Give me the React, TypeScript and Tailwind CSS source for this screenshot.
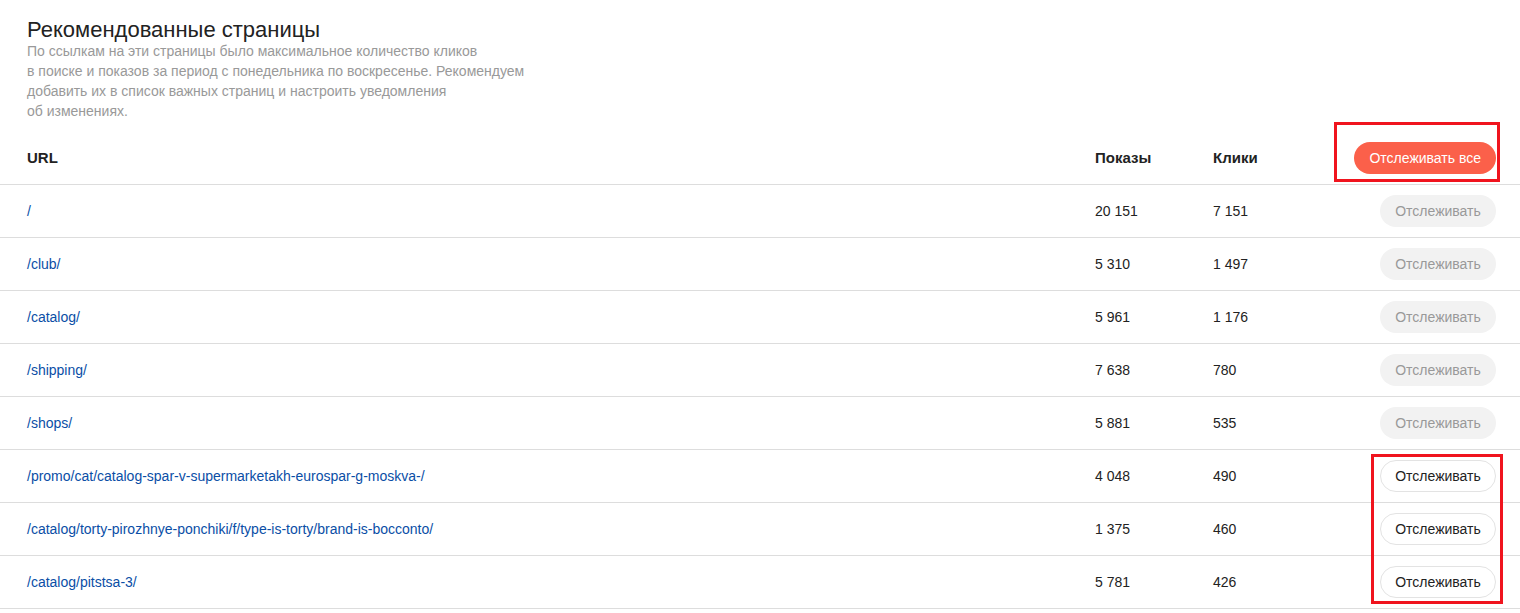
import React from 'react'

interface Row {
  url: string
  shows: string
  clicks: string
  active: boolean
}

const rows: Row[] = [
  { url: '/', shows: '20 151', clicks: '7 151', active: false },
  { url: '/club/', shows: '5 310', clicks: '1 497', active: false },
  { url: '/catalog/', shows: '5 961', clicks: '1 176', active: false },
  { url: '/shipping/', shows: '7 638', clicks: '780', active: false },
  { url: '/shops/', shows: '5 881', clicks: '535', active: false },
  { url: '/promo/cat/catalog-spar-v-supermarketakh-eurospar-g-moskva-/', shows: '4 048', clicks: '490', active: true },
  { url: '/catalog/torty-pirozhnye-ponchiki/f/type-is-torty/brand-is-bocconto/', shows: '1 375', clicks: '460', active: true },
  { url: '/catalog/pitstsa-3/', shows: '5 781', clicks: '426', active: true },
]

const gridCls = 'grid grid-cols-[1068px_118px_1fr_auto] items-center pl-[27px] pr-[24px] border-b border-[#dddddd]'

export default function App() {
  return (
    <div className="relative w-[1520px] h-[613px] overflow-hidden bg-white text-[14px] text-[#222] font-['Liberation_Sans',Arial,sans-serif]">
      <div className="pl-[27px] pt-[16px]">
        <h1 className="text-[22px] leading-[28px] text-[#222]">Рекомендованные страницы</h1>
        <p className="-mt-[3px] text-[14px] leading-[20px] text-[#999]">
          По ссылкам на эти страницы было максимальное количество кликов
          <br />
          в поиске и показов за период с понедельника по воскресенье. Рекомендуем
          <br />
          добавить их в список важных страниц и настроить уведомления
          <br />
          об изменениях.
        </p>
      </div>

      <div className="mt-[11px]">
        <div className={`${gridCls} h-[53px] font-bold text-[15px]`}>
          <div>URL</div>
          <div>Показы</div>
          <div>Клики</div>
          <button className="h-[32px] px-[15px] rounded-full bg-[#fb604a] text-white font-normal text-[14px]">
            Отслеживать все
          </button>
        </div>

        {rows.map(r => (
          <div key={r.url} className={`${gridCls} h-[53px]`}>
            <a className="text-[#0a4ea6] cursor-pointer">{r.url}</a>
            <div>{r.shows}</div>
            <div>{r.clicks}</div>
            {r.active ? (
              <button className="h-[32px] w-[116px] rounded-full border border-[#e3e3e3] bg-white text-[#222] text-[14px]">
                Отслеживать
              </button>
            ) : (
              <button className="h-[32px] w-[116px] rounded-full bg-[#f2f2f2] text-[#999] text-[14px]">
                Отслеживать
              </button>
            )}
          </div>
        ))}
      </div>

      {/* annotation boxes */}
      <div className="absolute left-[1334px] top-[122px] w-[166px] h-[60px] border-[3px] border-[#f0141e]" />
      <div className="absolute left-[1371px] top-[454px] w-[132px] h-[150px] border-[3px] border-[#f0141e]" />
    </div>
  )
}
